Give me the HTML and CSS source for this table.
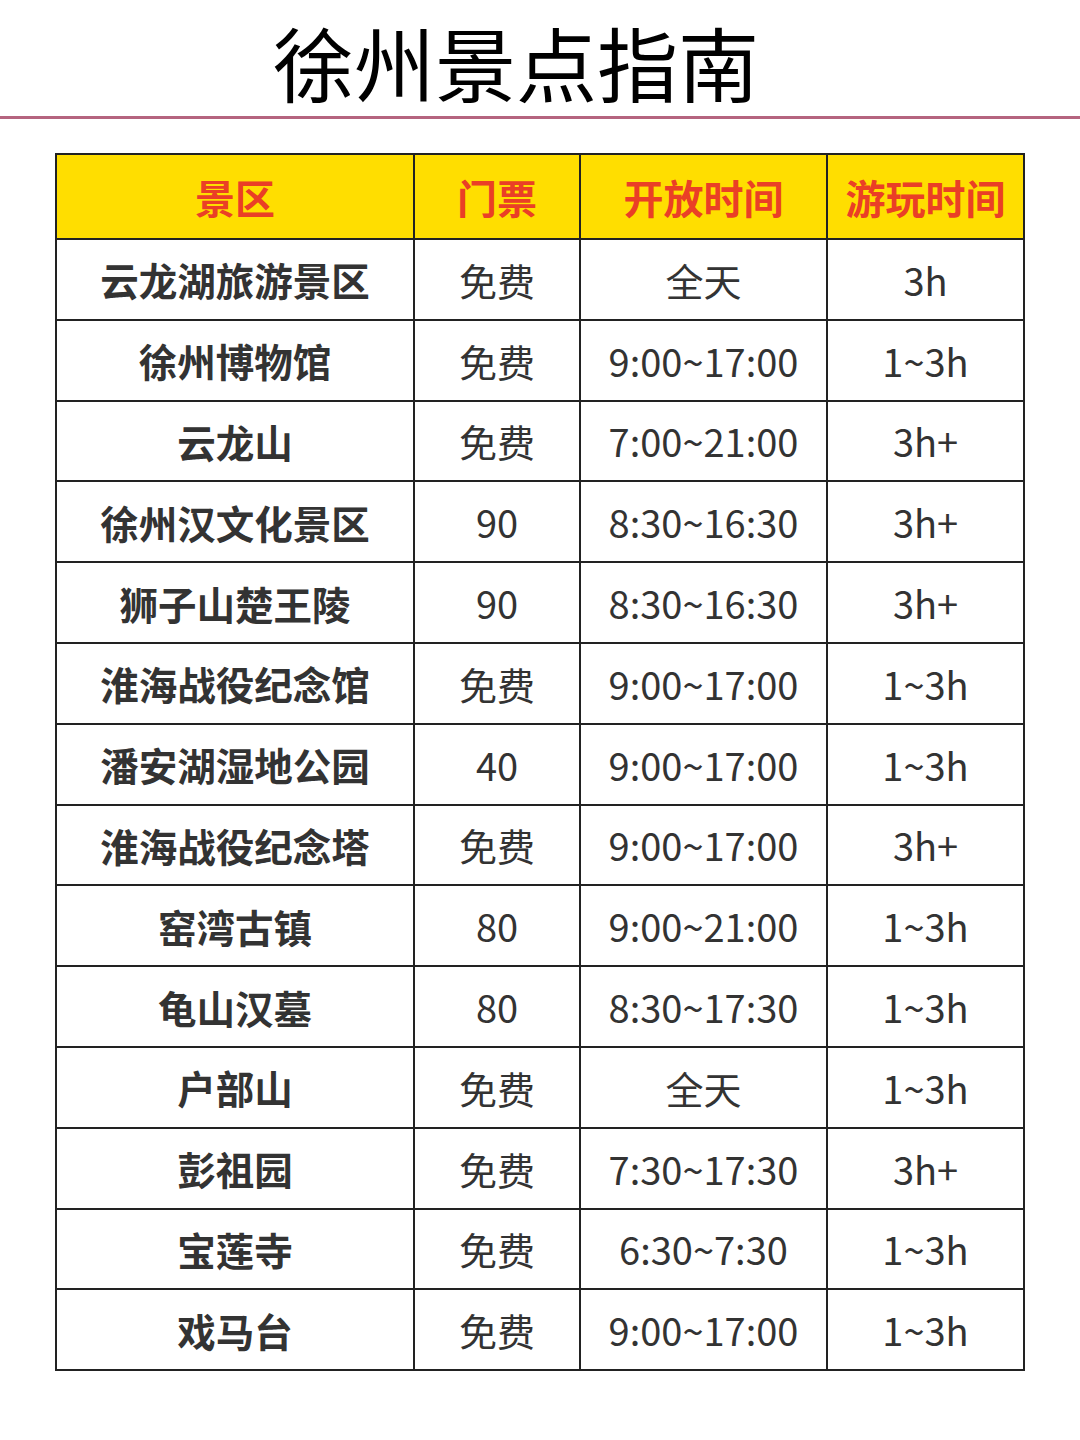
FILE: index.html
```html
<!DOCTYPE html>
<html lang="zh-CN">
<head>
<meta charset="utf-8">
<title>徐州景点指南</title>
<link rel="stylesheet" href="styles.css">
</head>
<body>
<header class="title-bar">
  <h1 class="title">徐州景点指南</h1>
</header>
<main class="content">
  <table class="guide">
    <colgroup>
      <col class="c1"><col class="c2"><col class="c3"><col class="c4">
    </colgroup>
    <thead>
      <tr><th>景区</th><th>门票</th><th>开放时间</th><th>游玩时间</th></tr>
    </thead>
    <tbody>
      <tr><td class="name">云龙湖旅游景区</td><td>免费</td><td>全天</td><td>3h</td></tr>
      <tr><td class="name">徐州博物馆</td><td>免费</td><td>9:00~17:00</td><td>1~3h</td></tr>
      <tr><td class="name">云龙山</td><td>免费</td><td>7:00~21:00</td><td>3h+</td></tr>
      <tr><td class="name">徐州汉文化景区</td><td>90</td><td>8:30~16:30</td><td>3h+</td></tr>
      <tr><td class="name">狮子山楚王陵</td><td>90</td><td>8:30~16:30</td><td>3h+</td></tr>
      <tr><td class="name">淮海战役纪念馆</td><td>免费</td><td>9:00~17:00</td><td>1~3h</td></tr>
      <tr><td class="name">潘安湖湿地公园</td><td>40</td><td>9:00~17:00</td><td>1~3h</td></tr>
      <tr><td class="name">淮海战役纪念塔</td><td>免费</td><td>9:00~17:00</td><td>3h+</td></tr>
      <tr><td class="name">窑湾古镇</td><td>80</td><td>9:00~21:00</td><td>1~3h</td></tr>
      <tr><td class="name">龟山汉墓</td><td>80</td><td>8:30~17:30</td><td>1~3h</td></tr>
      <tr><td class="name">户部山</td><td>免费</td><td>全天</td><td>1~3h</td></tr>
      <tr><td class="name">彭祖园</td><td>免费</td><td>7:30~17:30</td><td>3h+</td></tr>
      <tr><td class="name">宝莲寺</td><td>免费</td><td>6:30~7:30</td><td>1~3h</td></tr>
      <tr><td class="name">戏马台</td><td>免费</td><td>9:00~17:00</td><td>1~3h</td></tr>
    </tbody>
  </table>
</main>
</body>
</html>
```

FILE: styles.css
```css
html, body {
  margin: 0;
  padding: 0;
  background: #ffffff;
}

body {
  width: 1080px;
  font-family: "Noto Sans CJK SC", "Noto Sans", sans-serif;
  color: #333333;
}

.title-bar {
  height: 116px;
  border-bottom: 3px solid #b5647f;
  display: flex;
  align-items: flex-start;
  justify-content: center;
  padding-right: 48px;
  box-sizing: content-box;
}

.title {
  margin: 0;
  padding-top: 16px;
  font-size: 81px;
  font-weight: 400;
  line-height: 1.1;
  color: #000000;
}

.content {
  padding: 34px 0 0 55px;
}

.guide {
  border-collapse: collapse;
  width: 970px;
  table-layout: fixed;
  border: 2px solid #222222;
}

.c1 { width: 358px; }
.c2 { width: 166px; }
.c3 { width: 247px; }
.c4 { width: 197px; }

.guide th,
.guide td {
  border: 2px solid #222222;
  text-align: center;
  vertical-align: middle;
  padding: 0;
  white-space: nowrap;
}

.guide th {
  height: 83px;
  background: #ffde00;
  color: #ea3f26;
  font-size: 40px;
  font-weight: 700;
}

.guide td {
  height: 78.8px;
  font-size: 38px;
  font-weight: 400;
  color: #333333;
}

.guide td.name {
  font-weight: 700;
  font-size: 38.5px;
}
```
